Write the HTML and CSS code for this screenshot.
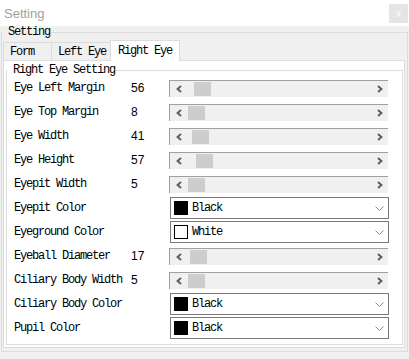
FILE: index.html
```html
<!DOCTYPE html>
<html lang="en">
<head>
    <meta charset="UTF-8">
    <meta name="viewport" content="width=device-width, initial-scale=1.0">
    <title>Setting</title>
    <link rel="stylesheet" href="styles.css">
</head>
<body>
    <div class="window">
        <div class="title-bar">
            <span class="title">Setting</span>
            <button class="close-btn" aria-label="Close">x</button>
        </div>

        <fieldset class="group outer-group">
            <legend>Setting</legend>
            <div class="tab-control">
                <div class="tab-strip" role="tablist">
                    <div class="tab tab-form" role="tab">Form</div>
                    <div class="tab tab-left" role="tab">Left Eye</div>
                    <div class="tab tab-right active" role="tab" aria-selected="true">Right Eye</div>
                </div>
                <div class="tab-page">
                    <fieldset class="group inner-group">
                        <legend>Right Eye Setting</legend>
                        <div class="rows">
                            <div class="row">
                                <span class="label">Eye Left Margin</span>
                                <span class="value">56</span>
                                <div class="scrollbar">
                                    <span class="arrow"><svg width="6" height="8" viewBox="0 0 6 8"><polyline points="5,1 1.6,4 5,7"/></svg></span>
                                    <span class="track"><span class="thumb" style="margin-left: 7px"></span></span>
                                    <span class="arrow"><svg width="6" height="8" viewBox="0 0 6 8"><polyline points="1,1 4.4,4 1,7"/></svg></span>
                                </div>
                            </div>
                            <div class="row">
                                <span class="label">Eye Top Margin</span>
                                <span class="value">8</span>
                                <div class="scrollbar">
                                    <span class="arrow"><svg width="6" height="8" viewBox="0 0 6 8"><polyline points="5,1 1.6,4 5,7"/></svg></span>
                                    <span class="track"><span class="thumb" style="margin-left: 1px"></span></span>
                                    <span class="arrow"><svg width="6" height="8" viewBox="0 0 6 8"><polyline points="1,1 4.4,4 1,7"/></svg></span>
                                </div>
                            </div>
                            <div class="row">
                                <span class="label">Eye Width</span>
                                <span class="value">41</span>
                                <div class="scrollbar">
                                    <span class="arrow"><svg width="6" height="8" viewBox="0 0 6 8"><polyline points="5,1 1.6,4 5,7"/></svg></span>
                                    <span class="track"><span class="thumb" style="margin-left: 5px"></span></span>
                                    <span class="arrow"><svg width="6" height="8" viewBox="0 0 6 8"><polyline points="1,1 4.4,4 1,7"/></svg></span>
                                </div>
                            </div>
                            <div class="row">
                                <span class="label">Eye Height</span>
                                <span class="value">57</span>
                                <div class="scrollbar">
                                    <span class="arrow"><svg width="6" height="8" viewBox="0 0 6 8"><polyline points="5,1 1.6,4 5,7"/></svg></span>
                                    <span class="track"><span class="thumb" style="margin-left: 9px"></span></span>
                                    <span class="arrow"><svg width="6" height="8" viewBox="0 0 6 8"><polyline points="1,1 4.4,4 1,7"/></svg></span>
                                </div>
                            </div>
                            <div class="row">
                                <span class="label">Eyepit Width</span>
                                <span class="value">5</span>
                                <div class="scrollbar">
                                    <span class="arrow"><svg width="6" height="8" viewBox="0 0 6 8"><polyline points="5,1 1.6,4 5,7"/></svg></span>
                                    <span class="track"><span class="thumb" style="margin-left: 1px"></span></span>
                                    <span class="arrow"><svg width="6" height="8" viewBox="0 0 6 8"><polyline points="1,1 4.4,4 1,7"/></svg></span>
                                </div>
                            </div>
                            <div class="row">
                                <span class="label">Eyepit Color</span>
                                <span class="value"></span>
                                <div class="combo">
                                    <span class="swatch black"></span>
                                    <span class="combo-text">Black</span>
                                    <svg class="chevron" width="9" height="5" viewBox="0 0 9 5"><polyline points="0.5,0.5 4.5,4.5 8.5,0.5"/></svg>
                                </div>
                            </div>
                            <div class="row">
                                <span class="label">Eyeground Color</span>
                                <span class="value"></span>
                                <div class="combo">
                                    <span class="swatch white"></span>
                                    <span class="combo-text">White</span>
                                    <svg class="chevron" width="9" height="5" viewBox="0 0 9 5"><polyline points="0.5,0.5 4.5,4.5 8.5,0.5"/></svg>
                                </div>
                            </div>
                            <div class="row">
                                <span class="label">Eyeball Diameter</span>
                                <span class="value">17</span>
                                <div class="scrollbar">
                                    <span class="arrow"><svg width="6" height="8" viewBox="0 0 6 8"><polyline points="5,1 1.6,4 5,7"/></svg></span>
                                    <span class="track"><span class="thumb" style="margin-left: 3px"></span></span>
                                    <span class="arrow"><svg width="6" height="8" viewBox="0 0 6 8"><polyline points="1,1 4.4,4 1,7"/></svg></span>
                                </div>
                            </div>
                            <div class="row">
                                <span class="label">Ciliary Body Width</span>
                                <span class="value">5</span>
                                <div class="scrollbar">
                                    <span class="arrow"><svg width="6" height="8" viewBox="0 0 6 8"><polyline points="5,1 1.6,4 5,7"/></svg></span>
                                    <span class="track"><span class="thumb" style="margin-left: 1px"></span></span>
                                    <span class="arrow"><svg width="6" height="8" viewBox="0 0 6 8"><polyline points="1,1 4.4,4 1,7"/></svg></span>
                                </div>
                            </div>
                            <div class="row">
                                <span class="label">Ciliary Body Color</span>
                                <span class="value"></span>
                                <div class="combo">
                                    <span class="swatch black"></span>
                                    <span class="combo-text">Black</span>
                                    <svg class="chevron" width="9" height="5" viewBox="0 0 9 5"><polyline points="0.5,0.5 4.5,4.5 8.5,0.5"/></svg>
                                </div>
                            </div>
                            <div class="row">
                                <span class="label">Pupil Color</span>
                                <span class="value"></span>
                                <div class="combo">
                                    <span class="swatch black"></span>
                                    <span class="combo-text">Black</span>
                                    <svg class="chevron" width="9" height="5" viewBox="0 0 9 5"><polyline points="0.5,0.5 4.5,4.5 8.5,0.5"/></svg>
                                </div>
                            </div>
                        </div>
                    </fieldset>
                </div>
            </div>
        </fieldset>
    </div>
</body>
</html>
```

FILE: styles.css
```css
:root {
    --face-color: #f0f0f0;
    --group-border: #dcdcdc;
    --control-border: #7a7a7a;
}

body {
    margin: 0;
    background: var(--face-color);
    font-family: "Liberation Mono", "DejaVu Sans Mono", monospace;
    font-size: 12px;
    letter-spacing: -1.2px;
    color: #000;
}

.window {
    width: 409px;
    height: 359px;
    display: flex;
    flex-direction: column;
}

/* Title bar */
.title-bar {
    height: 26px;
    background: #ffffff;
    display: flex;
    align-items: center;
    justify-content: space-between;
    padding: 0 1px 0 4px;
    box-sizing: border-box;
    flex-shrink: 0;
}

.title {
    font-family: "Liberation Sans", Arial, sans-serif;
    font-size: 13px;
    letter-spacing: 0;
    color: #a0a0a0;
}

.close-btn {
    width: 19px;
    height: 19px;
    padding: 0;
    border: 0;
    background: #e5e5e5;
    color: #fafafa;
    font: 11px "Liberation Sans", Arial, sans-serif;
    line-height: 17px;
}

/* Group boxes */
.group {
    border: 1px solid var(--group-border);
    margin: 0;
    padding: 0;
    min-width: 0;
    box-sizing: border-box;
}

.group > legend {
    padding: 0 1px 0 6px;
    font-size: 12px;
    line-height: 12px;
}

.outer-group {
    margin-left: 1px;
    width: 407px;
    height: 326px;
}

/* Tab control */
.tab-control {
    margin: 2px 0 0 1px;
    width: 402px;
}

.tab-strip {
    height: 20px;
    display: flex;
    align-items: flex-end;
    position: relative;
    z-index: 1;
}

.tab {
    height: 18px;
    box-sizing: border-box;
    border: 1px solid var(--group-border);
    border-bottom: 0;
    background: var(--face-color);
    padding-left: 6px;
    line-height: 19px;
    white-space: nowrap;
}

.tab-form {
    width: 49px;
}

.tab-left {
    width: 60px;
    margin-left: -1px;
}

.tab.active {
    width: 70px;
    height: 21px;
    margin-left: -1px;
    margin-bottom: -1px;
    padding-left: 7px;
    background: #ffffff;
    line-height: 20px;
}

.tab-page {
    height: 288px;
    box-sizing: border-box;
    border: 1px solid var(--group-border);
    background: #ffffff;
    padding: 3px 1px 2px 2px;
}

.inner-group {
    height: 281px;
}

/* Setting rows */
.rows {
    padding-left: 7px;
}

.row {
    display: grid;
    grid-template-columns: 117px 38px 220px;
    height: 24px;
    align-items: center;
}

.label {
    white-space: nowrap;
}

.value {
    font-family: "Liberation Sans", Arial, sans-serif;
    letter-spacing: 0;
}

.scrollbar {
    width: 219px;
    height: 17px;
    box-sizing: border-box;
    border-top: 1px solid #a0a0a0;
    border-left: 1px solid #a0a0a0;
    background: var(--face-color);
    display: flex;
}

.arrow {
    width: 17px;
    display: flex;
    align-items: center;
    justify-content: center;
}

.arrow svg {
    fill: none;
    stroke: #606060;
    stroke-width: 2;
}

.track {
    flex: 1;
}

.thumb {
    display: block;
    width: 17px;
    height: 14px;
    margin-top: 1px;
    background: #cdcdcd;
}

.combo {
    margin-left: 1px;
    width: 219px;
    height: 22px;
    box-sizing: border-box;
    border: 1px solid var(--control-border);
    background: #ffffff;
    display: flex;
    align-items: center;
    padding: 0 4px 0 3px;
}

.swatch {
    width: 14px;
    height: 14px;
    box-sizing: border-box;
    margin-right: 4px;
}

.swatch.black {
    background: #000000;
}

.swatch.white {
    background: #ffffff;
    border: 1px solid #000000;
}

.chevron {
    margin-left: auto;
    fill: none;
    stroke: #888888;
    stroke-width: 1;
}
```
